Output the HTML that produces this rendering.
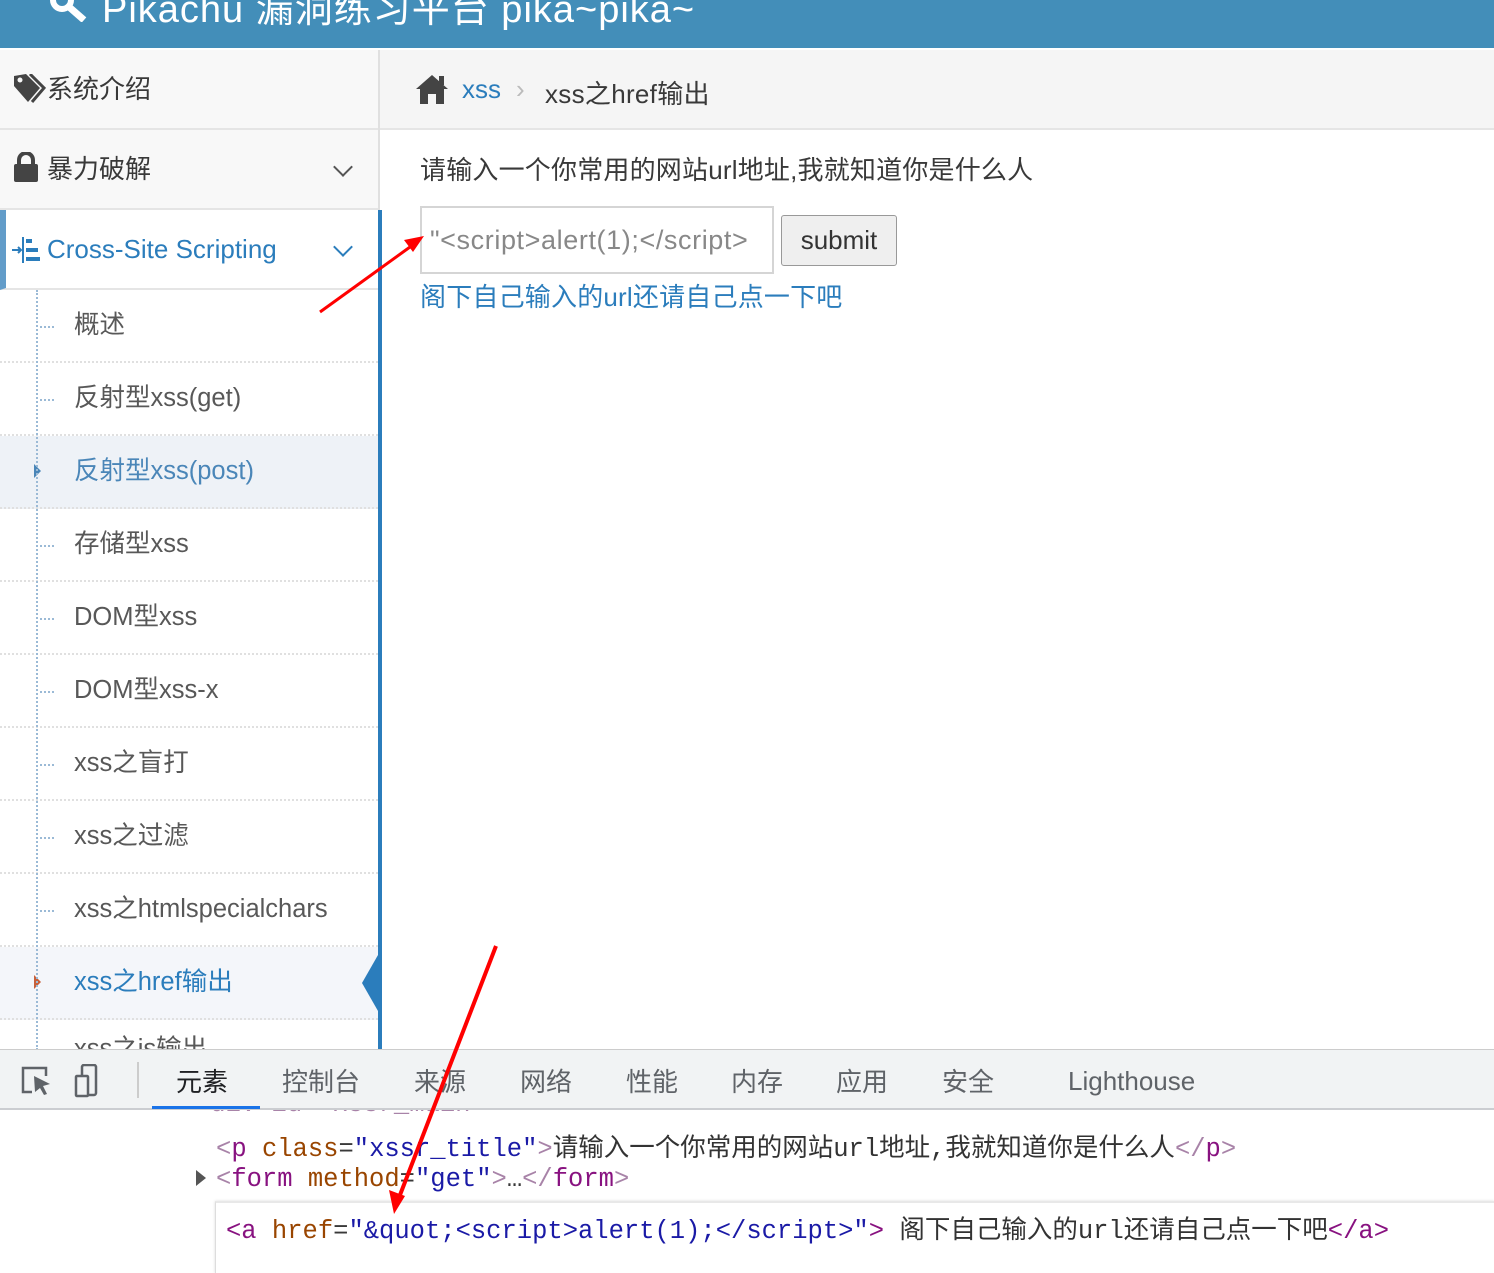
<!DOCTYPE html>
<html><head><meta charset="utf-8">
<style>
*{margin:0;padding:0;box-sizing:border-box}
body{width:1494px;height:1273px;overflow:hidden;background:#fff;font-family:"Liberation Sans","Noto Sans CJK SC",sans-serif;position:relative;color:#393939}
.abs{position:absolute}
#hdr{left:0;top:0;width:1494px;height:48px;background:#438eb9;overflow:hidden}
#hdr span{position:absolute;left:102px;top:-22px;font-size:38px;color:#fff;white-space:nowrap;letter-spacing:1px}
#side{left:0;top:50px;width:380px;height:1000px;background:#f8f8f8}
.row{position:absolute;left:0;width:378px;height:80px;border-bottom:2px solid #e5e5e5;font-size:26px;line-height:78px}
.sub{position:absolute;left:0;width:378px;height:73px;border-bottom:2px dotted #e0e0e0;font-size:25.5px;line-height:71px;background:#fff;color:#585858;white-space:nowrap}
.sub span{position:absolute;left:74px}
.sub i{position:absolute;left:40px;top:36px;width:14px;border-top:2px dotted #9bbad6}
.chev{position:absolute;left:336px;top:30px;width:14px;height:14px;border-right:2px solid #555;border-bottom:2px solid #555;transform:rotate(45deg)}
#crumb{left:380px;top:50px;width:1114px;height:80px;background:#f5f5f5;border-bottom:2px solid #e5e5e5;font-size:26px}
.code{font-family:"Liberation Mono","Noto Sans CJK SC",monospace;font-size:25.5px;white-space:nowrap;position:absolute}
.tg{color:#881280}.at{color:#994500}.av{color:#1a1aa6}.br{color:#a883a8}
</style></head><body>
<div id="hdr" class="abs"><svg class="abs" style="left:48px;top:-8px" width="44" height="30" viewBox="0 0 44 30"><circle cx="14" cy="8" r="9" fill="none" stroke="#fff" stroke-width="6"/><path d="M20 14 L36 28" stroke="#fff" stroke-width="7"/></svg><span>Pikachu 漏洞练习平台 pika~pika~</span></div>

<div id="side" class="abs">
 <div class="row" style="top:0;background:#f8f8f8"><svg class="abs" style="left:14px;top:24px" width="34" height="30" viewBox="0 0 34 30"><path d="M0 2 L0 12 L14 28 L26 14 L12 0 Z" fill="#444"/><circle cx="6" cy="6" r="2.5" fill="#f8f8f8"/><path d="M16 0 L30 14 L18 28" fill="none" stroke="#444" stroke-width="3"/></svg><span class="abs" style="left:47px">系统介绍</span></div>
 <div class="row" style="top:80px"><svg class="abs" style="left:14px;top:22px" width="24" height="30" viewBox="0 0 24 30"><path d="M5 13 V8 a7 7 0 0 1 14 0 V13" fill="none" stroke="#444" stroke-width="4"/><rect x="0" y="12" width="24" height="18" rx="2" fill="#444"/></svg><span class="abs" style="left:47px">暴力破解</span><div class="chev"></div></div>
 <div class="row" style="top:160px;background:#fff;border-left:6px solid #629cc9;color:#2b7dbc"><svg class="abs" style="left:6px;top:27px" width="30" height="26" viewBox="0 0 30 26"><path d="M0 13 H8 M6 10 L9 13 L6 16" stroke="#2b7dbc" stroke-width="2" fill="none"/><rect x="10" y="0" width="2" height="26" fill="#2b7dbc"/><rect x="14" y="2" width="6" height="4" fill="#2b7dbc"/><rect x="14" y="11" width="12" height="4" fill="#2b7dbc"/><rect x="14" y="20" width="14" height="4" fill="#2b7dbc"/></svg><span class="abs" style="left:41px">Cross-Site Scripting</span><div class="chev" style="border-color:#2b7dbc;left:330px"></div></div>
 <div class="sub" style="top:240px"><i></i><span>概述</span></div>
 <div class="sub" style="top:313px"><i></i><span>反射型xss(get)</span></div>
 <div class="sub" style="top:386px;background:#eef2f7;color:#4a86b8"><div class="abs" style="left:34px;top:28px;border-left:7px solid #4a86b8;border-top:7px solid transparent;border-bottom:7px solid transparent"></div><span>反射型xss(post)</span></div>
 <div class="sub" style="top:459px"><i></i><span>存储型xss</span></div>
 <div class="sub" style="top:532px"><i></i><span>DOM型xss</span></div>
 <div class="sub" style="top:605px"><i></i><span>DOM型xss-x</span></div>
 <div class="sub" style="top:678px"><i></i><span>xss之盲打</span></div>
 <div class="sub" style="top:751px"><i></i><span>xss之过滤</span></div>
 <div class="sub" style="top:824px"><i></i><span>xss之htmlspecialchars</span></div>
 <div class="sub" style="top:897px;background:#f4f6fa;color:#2b7dbc"><div class="abs" style="left:34px;top:28px;border-left:7px solid #c8603a;border-top:7px solid transparent;border-bottom:7px solid transparent"></div><span>xss之href输出</span><div class="abs" style="left:362px;top:8px;border-right:16px solid #2b7dbc;border-top:28px solid transparent;border-bottom:28px solid transparent"></div></div>
 <div class="sub" style="top:970px"><i></i><span style="top:-6px">xss之js输出</span></div>
 <div class="abs" style="left:36px;top:240px;height:760px;border-left:2px dotted #9bbad6"></div>
 <div class="abs" style="left:378px;top:0;width:2px;height:160px;background:#e0e0e0"></div>
 <div class="abs" style="left:378px;top:160px;width:4px;height:840px;background:#2b7dbc"></div>
</div>

<div id="crumb" class="abs"><svg class="abs" style="left:34px;top:23px" width="36" height="32" viewBox="0 0 36 32"><path d="M18 2 L2 16 L6 16 L6 31 L14 31 L14 21 L22 21 L22 31 L30 31 L30 16 L34 16 Z" fill="#444"/><rect x="25" y="3" width="5" height="9" fill="#444"/></svg><span class="abs" style="left:82px;top:24px;color:#2b7dbc">xss</span><span class="abs" style="left:136px;top:24px;color:#bbb">›</span><span class="abs" style="left:165px;top:24px;color:#393939;letter-spacing:0.3px">xss之href输出</span></div>

<div class="abs" style="left:420px;top:150px;font-size:26px;letter-spacing:0.2px;white-space:nowrap">请输入一个你常用的网站url地址,我就知道你是什么人</div>
<div class="abs" style="left:420px;top:206px;width:354px;height:68px;border:2px solid #d5d5d5;font-size:27px;letter-spacing:0.6px;color:#888;line-height:64px;padding-left:8px;overflow:hidden;white-space:nowrap">"&lt;script&gt;alert(1);&lt;/script&gt;</div>
<div class="abs" style="left:781px;top:215px;width:116px;height:51px;border:1px solid #999;border-radius:3px;background:#efefef;font-size:26px;line-height:48px;text-align:center;color:#333">submit</div>
<div class="abs" style="left:420px;top:277px;font-size:26px;letter-spacing:0.2px;color:#2b7dbc;white-space:nowrap">阁下自己输入的url还请自己点一下吧</div>

<div class="code" style="left:195px;top:1090px;color:#aaa"><span class="br">&lt;div id="xssr_main"&gt;</span></div>
<div class="abs" style="left:0;top:1049px;width:1494px;height:61px;background:#f1f3f4;border-top:1px solid #ccc;border-bottom:2px solid #cbcdd1"></div>
<svg class="abs" style="left:20px;top:1064px" width="100" height="34" viewBox="0 0 100 34"><path d="M12 28 H3 V4 H26 V12" fill="none" stroke="#5f6368" stroke-width="2.5"/><path d="M14 12 L30 20 L23 22 L27 30 L24 31 L20 24 L15 28 Z" fill="#5f6368"/><rect x="62" y="1" width="14" height="30" rx="2" fill="none" stroke="#5f6368" stroke-width="2.5"/><rect x="56" y="12" width="12" height="20" rx="1" fill="#f1f3f4" stroke="#5f6368" stroke-width="2.5"/></svg>
<div class="abs" style="left:137px;top:1062px;width:2px;height:36px;background:#ccc"></div>
<div class="abs" style="left:0;top:1062px;font-size:26px;color:#5f6368;white-space:nowrap">
<span class="abs" style="left:176px;color:#202124">元素</span><span class="abs" style="left:282px">控制台</span><span class="abs" style="left:414px">来源</span><span class="abs" style="left:520px">网络</span><span class="abs" style="left:626px">性能</span><span class="abs" style="left:731px">内存</span><span class="abs" style="left:836px">应用</span><span class="abs" style="left:942px">安全</span><span class="abs" style="left:1068px;top:4px">Lighthouse</span></div>
<div class="abs" style="left:152px;top:1106px;width:108px;height:3px;background:#1a73e8"></div>

<div class="code" style="left:216px;top:1127px"><span class="br">&lt;</span><span class="tg">p</span> <span class="at">class</span>=<span class="av">"xssr_title"</span><span class="br">&gt;</span><span style="color:#333">请输入一个你常用的网站url地址,我就知道你是什么人</span><span class="br">&lt;/</span><span class="tg">p</span><span class="br">&gt;</span></div>
<div class="abs" style="left:196px;top:1170px;border-left:10px solid #555;border-top:8px solid transparent;border-bottom:8px solid transparent"></div>
<div class="code" style="left:216px;top:1165px"><span class="br">&lt;</span><span class="tg">form</span> <span class="at">method</span>=<span class="av">"get"</span><span class="br">&gt;</span>…<span class="br">&lt;/</span><span class="tg">form</span><span class="br">&gt;</span></div>
<div class="abs" style="left:215px;top:1201px;width:1279px;height:72px;border-left:1px solid #ddd;border-top:2px solid #e8e8e8;box-shadow:0 0 3px #ddd;background:#fff"></div>
<div class="code" style="left:226px;top:1209px"><span class="tg">&lt;a</span> <span class="at">href</span>=<span class="av">"&amp;quot;&lt;script&gt;alert(1);&lt;/script&gt;"</span><span class="tg">&gt;</span> <span style="color:#333">阁下自己输入的url还请自己点一下吧</span><span class="tg">&lt;/a&gt;</span></div>

<svg class="abs" style="left:0;top:0" width="1494" height="1273">
<line x1="320" y1="312" x2="410" y2="247" stroke="#f00" stroke-width="3"/>
<path d="M424 236 L404 240 L413 252 Z" fill="#f00"/>
<line x1="496" y1="946" x2="400" y2="1195" stroke="#f00" stroke-width="4"/>
<path d="M394 1214 L389 1190 L405 1196 Z" fill="#f00"/>
</svg>
</body></html>
